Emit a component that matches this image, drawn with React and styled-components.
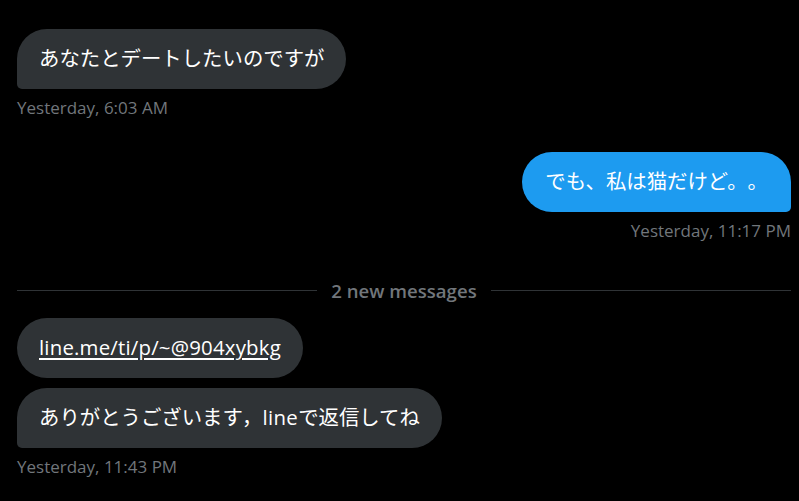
import React from "react";
import styled, { createGlobalStyle } from "styled-components";

const Global = createGlobalStyle`
  html, body { margin: 0; padding: 0; background: #000; }
  body { font-family: "Open Sans", "Noto Sans CJK JP", sans-serif; }
`;

const Thread = styled.div`
  display: flex;
  flex-direction: column;
  padding: 29px 8px 20px 17px;
  background: #000;
  min-height: 501px;
  box-sizing: border-box;
`;

const Group = styled.div`
  display: flex;
  flex-direction: column;
  align-items: ${(p) => (p.$mine ? "flex-end" : "flex-start")};
  gap: 10px;
  margin-top: ${(p) => p.$top || 0}px;
`;

const Bubble = styled.div`
  font-family: "Open Sans", "Noto Sans CJK JP", sans-serif;
  font-size: 20.4px;
  line-height: 27px;
  color: #fff;
  text-spacing-trim: space-all;
  background: ${(p) => (p.$mine ? "#1d9bf0" : "#2f3336")};
  padding: 16px ${(p) => (p.$mine ? 23 : 22)}px 17px;
  border-radius: 30px;
  ${(p) =>
    p.$tail
      ? p.$mine
        ? "border-bottom-right-radius: 5px;"
        : "border-bottom-left-radius: 5px;"
      : ""}
`;

const Latin = styled.span`
  letter-spacing: 0.35px;
`;

const Link = styled.a`
  color: #fff;
  text-decoration: underline;
  text-underline-offset: 3px;
  letter-spacing: 0.2px;
`;

const Stamp = styled.div`
  font-family: "Open Sans", sans-serif;
  font-size: 17px;
  line-height: 22px;
  color: #71767b;
  margin-top: -2px;
`;

const Divider = styled.div`
  display: flex;
  align-items: center;
  gap: 14px;
  margin-top: 36px;
  margin-bottom: 16px;
  height: 24px;
  &::before,
  &::after {
    content: "";
    flex: 1;
    height: 1px;
    background: #2f3336;
  }
`;

const DividerText = styled.span`
  font-family: "Open Sans", sans-serif;
  font-weight: 600;
  font-size: 18.6px;
  color: #71767b;
`;

export default function App() {
  return (
    <>
      <Global />
      <Thread>
        <Group>
          <Bubble $tail>あなたとデートしたいのですが</Bubble>
          <Stamp>Yesterday, 6:03 AM</Stamp>
        </Group>
        <Group $mine $top={33}>
          <Bubble $mine $tail>でも、私は猫だけど。。</Bubble>
          <Stamp>Yesterday, 11:17 PM</Stamp>
        </Group>
        <Divider>
          <DividerText>2 new messages</DividerText>
        </Divider>
        <Group>
          <Bubble>
            <Link href="#">line.me/ti/p/~@904xybkg</Link>
          </Bubble>
          <Bubble $tail>
            ありがとうございます，<Latin>line</Latin>で返信してね
          </Bubble>
          <Stamp>Yesterday, 11:43 PM</Stamp>
        </Group>
      </Thread>
    </>
  );
}
